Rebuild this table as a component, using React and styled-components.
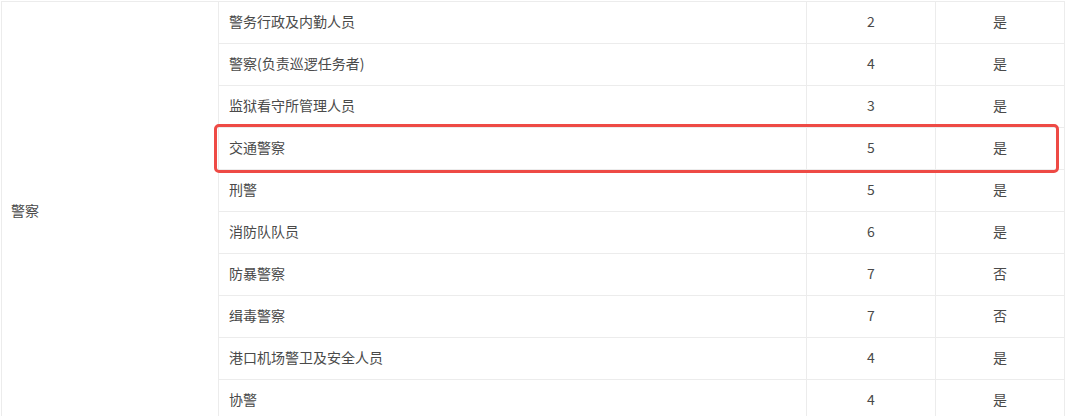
import React from "react";
import styled, { createGlobalStyle } from "styled-components";

const Global = createGlobalStyle`
  html, body {
    margin: 0;
    padding: 0;
    background: #ffffff;
    overflow: hidden;
  }
  body {
    font-family: "Noto Sans CJK SC", "Noto Sans", sans-serif;
  }
`;

const Wrapper = styled.div`
  position: relative;
  padding: 1px 0 0 1px;
  width: 1080px;
  height: 416px;
  box-sizing: border-box;
  overflow: hidden;
`;

const Table = styled.table`
  border-collapse: collapse;
  table-layout: fixed;
  width: 1063px;
  font-size: 14px;
  color: #4a4a4a;
`;

const Row = styled.tr`
  height: 42px;
`;

const Cell = styled.td`
  border: 1px solid #ececec;
  padding: 0 ${(p) => (p.$first ? "9px" : "10px")} 3px;
  text-align: ${(p) => (p.$center ? "center" : "left")};
  vertical-align: middle;
  line-height: 20px;
  white-space: nowrap;
  overflow: hidden;
`;

const Highlight = styled.div`
  position: absolute;
  left: 214px;
  top: 124px;
  width: 845px;
  height: 49px;
  box-sizing: border-box;
  border: 3px solid #ee4a45;
  border-radius: 5px;
  pointer-events: none;
`;

const rows = [
  ["警务行政及内勤人员", "2", "是"],
  ["警察(负责巡逻任务者)", "4", "是"],
  ["监狱看守所管理人员", "3", "是"],
  ["交通警察", "5", "是"],
  ["刑警", "5", "是"],
  ["消防队队员", "6", "是"],
  ["防暴警察", "7", "否"],
  ["缉毒警察", "7", "否"],
  ["港口机场警卫及安全人员", "4", "是"],
  ["协警", "4", "是"],
];

export default function App() {
  return (
    <>
      <Global />
      <Wrapper>
        <Table>
          <colgroup>
            <col style={{ width: 217 }} />
            <col style={{ width: 588 }} />
            <col style={{ width: 129 }} />
            <col style={{ width: 129 }} />
          </colgroup>
          <tbody>
            {rows.map((r, i) => (
              <Row key={i}>
                {i === 0 && (
                  <Cell $first rowSpan={rows.length}>
                    警察
                  </Cell>
                )}
                <Cell>{r[0]}</Cell>
                <Cell $center>{r[1]}</Cell>
                <Cell $center>{r[2]}</Cell>
              </Row>
            ))}
          </tbody>
        </Table>
        <Highlight />
      </Wrapper>
    </>
  );
}
